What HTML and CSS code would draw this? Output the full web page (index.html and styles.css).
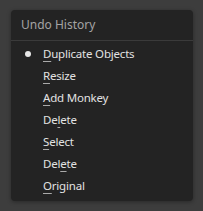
FILE: index.html
```html
<!DOCTYPE html>
<html lang="en">
<head>
  <meta charset="UTF-8">
  <title>Undo History</title>
  <link rel="stylesheet" href="styles.css">
</head>
<body>
  <div class="menu">
    <div class="menu-title">Undo History</div>
    <div class="separator"></div>
    <ul class="items">
      <li class="item active"><span class="dot"></span><u>D</u>uplicate Objects</li>
      <li class="item"><u>R</u>esize</li>
      <li class="item"><u>A</u>dd Monkey</li>
      <li class="item">De<u>l</u>ete</li>
      <li class="item"><u>S</u>elect</li>
      <li class="item">Del<u>e</u>te</li>
      <li class="item"><u>O</u>riginal</li>
    </ul>
  </div>
</body>
</html>
```
FILE: styles.css
```css
body {
  margin: 0;
  padding: 10px 0 0 11px;
  height: 211px;
  box-sizing: border-box;
  background-color: #3d3d3d;
  font-family: "Noto Sans", sans-serif;
  font-size: 11px;
}

.menu {
  width: 182px;
  height: 191px;
  box-sizing: border-box;
  background-color: #232323;
  border-radius: 4px;
  box-shadow: 0 1px 4px rgba(0, 0, 0, 0.35);
}

.menu-title {
  height: 30px;
  line-height: 30px;
  padding-left: 10px;
  font-size: 12px;
  color: #a3a3a3;
}

.separator {
  height: 1px;
  background-color: #3a3a3a;
}

.items {
  list-style: none;
  margin: 0;
  padding: 2px 0 0 0;
}

.item {
  position: relative;
  height: 22px;
  line-height: 22px;
  padding-left: 32px;
  font-size: 11.5px;
  letter-spacing: -0.2px;
  color: #e2e2e2;
}

.item u {
  text-decoration-color: #aaaaaa;
  text-underline-offset: 3px;
}

.dot {
  position: absolute;
  left: 14px;
  top: 8px;
  width: 6px;
  height: 6px;
  border-radius: 50%;
  background-color: #e6e6e6;
}
```
